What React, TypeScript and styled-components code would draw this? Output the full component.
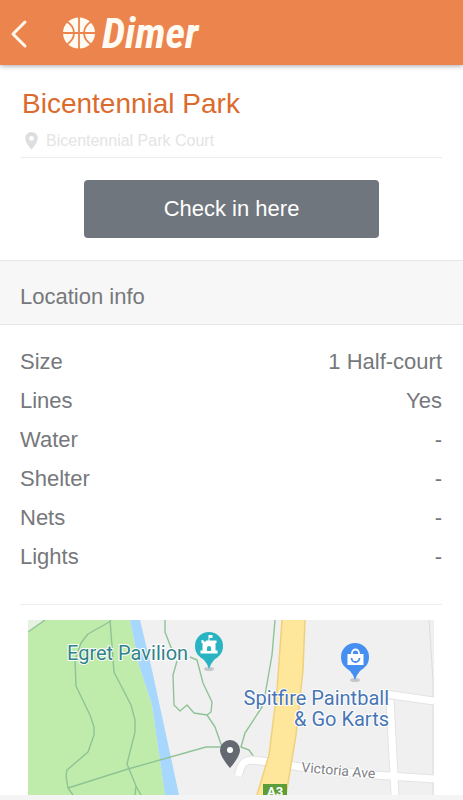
import React from "react";
import styled, { createGlobalStyle } from "styled-components";

const GlobalStyle = createGlobalStyle`
  *, *::before, *::after { box-sizing: border-box; }
  body {
    margin: 0;
    background: #f4f4f5;
    color: #76787c;
    font-family: "Liberation Sans", Arial, sans-serif;
    font-size: 22px;
  }
`;

const Page = styled.div`
  background: #fff;
`;

const Header = styled.header`
  display: flex;
  align-items: center;
  gap: 32px;
  height: 65px;
  padding: 2px 8px 0;
  background: #ec844d;
  box-shadow: 0 1px 5px rgba(0, 0, 0, 0.35);
`;

const BackButton = styled.button`
  display: flex;
  padding: 0;
  border: 0;
  background: none;
  color: #fff8ee;
  cursor: pointer;
`;

const Brand = styled.a`
  display: flex;
  align-items: center;
  gap: 6px;
  color: #fffaf2;
  font: italic bold 42px/60px "Liberation Sans Narrow", "Arial Narrow", "Roboto Condensed", sans-serif;
  text-decoration: none;
`;

const Intro = styled.section`
  padding: 21px 21px 22px;
`;

const Title = styled.h1`
  margin: 0;
  padding-left: 1px;
  color: #dc6a2d;
  font-size: 28px;
  font-weight: 400;
  line-height: 36px;
`;

const Address = styled.p`
  display: flex;
  align-items: center;
  gap: 8px;
  margin: 0;
  padding: 8px 4px 5px;
  border-bottom: 1px solid #ededed;
  color: #e4e4e4;
  font-size: 16px;
  line-height: 22px;
`;

const CheckIn = styled.button`
  display: block;
  width: 70%;
  height: 58px;
  margin: 22px auto 0;
  border: 0;
  border-radius: 4px;
  background: #70767e;
  color: #fff;
  font: inherit;
  cursor: pointer;
`;

const SectionTitle = styled.h2`
  margin: 0;
  padding: 21px 20px 12px;
  border: solid #e6e6e6;
  border-width: 1px 0;
  background: #f7f7f7;
  font-size: 22px;
  font-weight: 400;
  line-height: 30px;
`;

const Facts = styled.dl`
  margin: 0 21px 0 20px;
  padding: 17px 0 28px;
  border-bottom: 1px solid #ededed;
`;

const Fact = styled.div`
  display: flex;
  justify-content: space-between;
  line-height: 39px;

  dd { margin: 0; }
`;

const MapFrame = styled.div`
  padding: 15px 29px 0 28px;
`;

const MapDrawing = styled.svg`
  display: block;
  width: 100%;
  height: auto;
  font-family: Roboto, sans-serif;
`;

const PlaceLabel = styled.text`
  font-size: 20px;
  paint-order: stroke;
  stroke: #fff;
  stroke-width: 2px;
  stroke-linejoin: round;
`;

const facts = [
  ["Size", "1 Half-court"],
  ["Lines", "Yes"],
  ["Water", "-"],
  ["Shelter", "-"],
  ["Nets", "-"],
  ["Lights", "-"],
];

const BackIcon = () => (
  <svg width="22" height="30" viewBox="0 0 22 30" fill="none" stroke="currentColor" strokeWidth="3" strokeLinecap="round" strokeLinejoin="round" aria-hidden="true">
    <path d="M17 3 5 15l12 12" />
  </svg>
);

const BallIcon = () => (
  <svg width="34" height="34" viewBox="0 0 34 34" aria-hidden="true">
    <ellipse cx="17" cy="16" rx="16" ry="15.500" fill="currentColor" />
    <g fill="none" stroke="#ec844d" strokeWidth="1.800">
      <path d="M17 0v34M0 16h34" />
      <path d="M4 4c5 3 8 7 8 12s-3 9-8 12M30 4c-5 3-8 7-8 12s3 9 8 12" />
    </g>
  </svg>
);

const PinIcon = () => (
  <svg width="13" height="18" viewBox="0 0 13 18" fill="#dedede" aria-hidden="true">
    <path fillRule="evenodd" d="M6.500 0A6.300 6.300 0 0 0 .2 6.300C.2 11 6.500 17.500 6.500 17.500S12.800 11 12.800 6.300A6.300 6.300 0 0 0 6.500 0Zm0 4a2.400 2.400 0 1 1 0 4.800a2.400 2.400 0 0 1 0-4.800Z" />
  </svg>
);

const LocationMap = () => (
  <MapDrawing viewBox="28 620 406 175" role="img" aria-label="Map of Bicentennial Park">
    <rect x="28" y="620" width="406" height="175" fill="#f0f0f1" />
    <path d="M28 620H130L139 665 152 705 157 740 165 795H28Z" fill="#bfecab" />
    <path d="M28 620H45L28 632Z" fill="#e7f1e2" />
    <path d="M130 620H140L152 670 165 730 179 795H165L157 740 152 705 139 665Z" fill="#a8d7fd" />
    <g fill="none" stroke="#8fc396" strokeWidth="1.400" strokeLinejoin="round">
      <path d="M28 632 45 620M111 621 88 634 81 643 75 660 76 686 90 715 94 727V735L88 752 67 770 66 776 68 788 73 795" />
      <path d="M110 620 114 672 131 705 135 720V732L127 764 136 786 141 795M136 786 135 795M68 788 128 769 206 747H222" />
      <path d="M165 620V632L172 650M190 657 197 660 203 683 212 702 211 712 207 715 194 713 187 705 180 711 174 705 173 675 177 661M207 715 215 727 222 747" />
      <path d="M275 620 272 655 265 695 262 707 245 733 241 747 249 750 254 757" />
    </g>
    <g fill="none" strokeLinejoin="round">
      <path d="M429 620 433 680V795" stroke="#dcdddf" strokeWidth="1" />
      <path d="M238 776 241 767Q244 760 252 760L270 762 300 767 375 775 434 779M390 700 395 795M385 694 434 701" stroke="#e2e3e5" strokeWidth="9" />
      <path d="M238 776 241 767Q244 760 252 760L270 762 300 767 375 775 434 779M390 700 395 795M385 694 434 701" stroke="#fff" strokeWidth="7" />
    </g>
    <path d="M282 620 277 690 269 755 257 795H286L296 735 303 670 305 620Z" fill="#fee69a" />
    <path d="M282 620 277 690 269 755 257 795M286 795 296 735 303 670 305 620" fill="none" stroke="#efd17c" strokeWidth="1.500" />
    <rect x="263" y="784" width="24" height="11" fill="#5b9d3b" />
    <text x="275" y="796" textAnchor="middle" fontSize="13" fontWeight="700" fill="#fff">A3</text>

    <ellipse cx="209" cy="669" rx="5" ry="2" fill="#c4c8cb" />
    <path d="M209 632a14 14 0 0 0-14 14c0 8 5 11 9 14q3 3 5 9 2-6 5-9c4-3 9-6 9-14a14 14 0 0 0-14-14Z" fill="#2ab4c3" />
    <path d="M208.500 635h4v3h-3v2.500h7V643H215.500v7.500H217.500v3h-17v-3h2V643h-1v-3h2v1.500h2.500v-1h2.500Z" fill="#fff" />
    <path d="M207 651v-3a2 2 0 0 1 4 0v3Z" fill="#2ab4c3" />

    <ellipse cx="355" cy="680" rx="5" ry="2" fill="#c4c8cb" />
    <path d="M355 643a14 14 0 0 0-14 14c0 8 5 11 9 14q3 3 5 9 2-6 5-9c4-3 9-6 9-14a14 14 0 0 0-14-14Z" fill="#468ef0" />
    <path d="M347.500 654h16v11h-16Z" fill="#fff" />
    <path d="M352 655v-2a3.500 3.500 0 0 1 7 0v2" fill="none" stroke="#fff" strokeWidth="1.800" />
    <path d="M351.500 658a4 4 0 0 0 8 0" fill="none" stroke="#468ef0" strokeWidth="1.800" />

    <path d="M230 740a10 10 0 0 0-10 10c0 7 10 18 10 18s10-11 10-18a10 10 0 0 0-10-10Z" fill="#646870" />
    <circle cx="230" cy="750" r="3" fill="#fff" />

    <PlaceLabel x="67" y="660" fill="#30838a">Egret Pavilion</PlaceLabel>
    <PlaceLabel x="389" y="705" textAnchor="end" fill="#4775b5">Spitfire Paintball</PlaceLabel>
    <PlaceLabel x="389" y="726" textAnchor="end" fill="#4775b5">&amp; Go Karts</PlaceLabel>
    <text x="301" y="772" transform="rotate(5 301 772)" fontSize="14" fill="#808286" stroke="#fff" strokeWidth="2" paintOrder="stroke">Victoria Ave</text>
  </MapDrawing>
);

export default function App() {
  return (
    <>
      <GlobalStyle />
      <Page>
        <Header>
          <BackButton type="button" aria-label="Back"><BackIcon /></BackButton>
          <Brand href="#"><BallIcon />Dimer</Brand>
        </Header>
        <main>
          <Intro>
            <Title>Bicentennial Park</Title>
            <Address><PinIcon />Bicentennial Park Court</Address>
            <CheckIn type="button">Check in here</CheckIn>
          </Intro>
          <SectionTitle>Location info</SectionTitle>
          <Facts>
            {facts.map(([name, value]) => (
              <Fact key={name}><dt>{name}</dt><dd>{value}</dd></Fact>
            ))}
          </Facts>
          <MapFrame><LocationMap /></MapFrame>
        </main>
      </Page>
    </>
  );
}
